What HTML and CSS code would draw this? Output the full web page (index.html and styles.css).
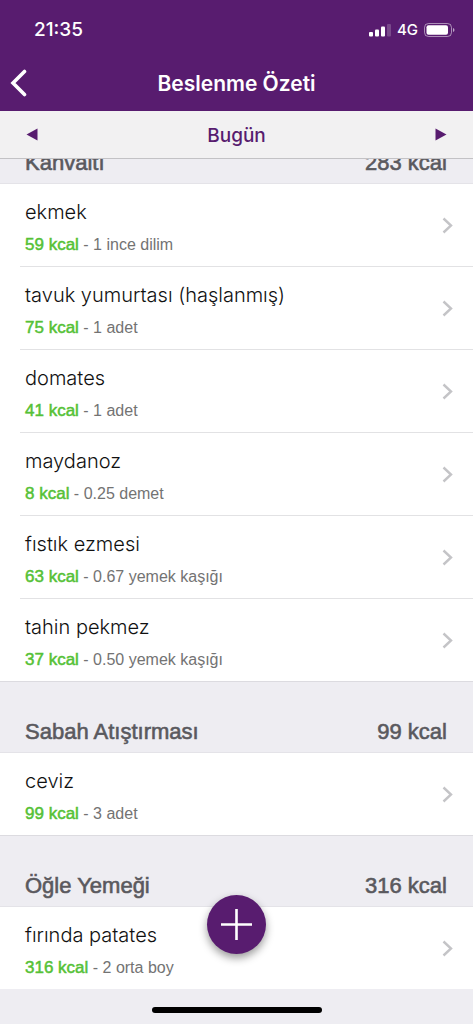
FILE: index.html
```html
<!DOCTYPE html>
<html lang="tr">
<head>
<meta charset="utf-8">
<meta name="viewport" content="width=device-width, initial-scale=1">
<title>Beslenme Özeti</title>
<link rel="stylesheet" href="styles.css">
</head>
<body>
<svg class="sprite" aria-hidden="true">
  <symbol id="chevron" viewBox="0 0 11 17"><path d="M1.5 1.5 L9 8.5 L1.5 15.5" fill="none" stroke="#c4c4c7" stroke-width="2.400"/></symbol>
</svg>
<header class="top">
  <div class="status">
    <span class="clock">21:35</span>
    <div class="indicators">
      <svg width="22" height="14" viewBox="0 0 22 14" aria-hidden="true">
        <rect x="0" y="9" width="4" height="4.500" rx="1" fill="#fff"/>
        <rect x="6" y="6.500" width="4" height="7" rx="1" fill="#fff"/>
        <rect x="12" y="3.500" width="4" height="10" rx="1" fill="#fff"/>
        <rect x="18" y="1" width="4" height="12.500" rx="1" fill="#fff" opacity=".2"/>
      </svg>
      <span class="network">4G</span>
      <svg width="31" height="14" viewBox="0 0 31 14" aria-hidden="true">
        <rect x=".5" y=".5" width="27" height="13" rx="4" fill="none" stroke="#fff" stroke-opacity=".5"/>
        <rect x="2.5" y="2.3" width="21.5" height="9.4" rx="2" fill="#fff"/>
        <path d="M29 5 Q30.500 5.500 30.500 7 Q30.500 8.500 29 9 Z" fill="#fff" opacity=".6"/>
      </svg>
    </div>
  </div>
  <nav class="navbar">
    <button class="back" type="button" aria-label="Geri">
      <svg width="17" height="28" viewBox="0 0 17 28" aria-hidden="true"><path d="M14.500 2.500 L3 14 L14.500 25.500" fill="none" stroke="#fff" stroke-width="3.600" stroke-linecap="round"/></svg>
    </button>
    <h1 class="title">Beslenme Özeti</h1>
  </nav>
</header>
<div class="datebar">
  <button class="step" type="button" aria-label="Önceki gün"><svg width="12" height="13" viewBox="0 0 12 13" aria-hidden="true"><path d="M0.500 6.500 L11.500 0.500 V12.500 Z" fill="#581c6f"/></svg></button>
  <span class="day">Bugün</span>
  <button class="step" type="button" aria-label="Sonraki gün"><svg width="12" height="13" viewBox="0 0 12 13" aria-hidden="true"><path d="M11.500 6.500 L0.500 0.500 V12.500 Z" fill="#581c6f"/></svg></button>
</div>
<main class="meals">
  <section class="meal scrolled">
    <h2 class="meal-head"><span>Kahvaltı</span><span>283 kcal</span></h2>
    <ul class="foods">
      <li><a class="food" href="#"><span class="info"><span class="name">ekmek</span><span class="detail"><b>59 kcal</b> - 1 ince dilim</span></span><svg class="chev"><use href="#chevron"/></svg></a></li>
      <li><a class="food" href="#"><span class="info"><span class="name">tavuk yumurtası (haşlanmış)</span><span class="detail"><b>75 kcal</b> - 1 adet</span></span><svg class="chev"><use href="#chevron"/></svg></a></li>
      <li><a class="food" href="#"><span class="info"><span class="name">domates</span><span class="detail"><b>41 kcal</b> - 1 adet</span></span><svg class="chev"><use href="#chevron"/></svg></a></li>
      <li><a class="food" href="#"><span class="info"><span class="name">maydanoz</span><span class="detail"><b>8 kcal</b> - 0.25 demet</span></span><svg class="chev"><use href="#chevron"/></svg></a></li>
      <li><a class="food" href="#"><span class="info"><span class="name">fıstık ezmesi</span><span class="detail"><b>63 kcal</b> - 0.67 yemek kaşığı</span></span><svg class="chev"><use href="#chevron"/></svg></a></li>
      <li><a class="food" href="#"><span class="info"><span class="name">tahin pekmez</span><span class="detail"><b>37 kcal</b> - 0.50 yemek kaşığı</span></span><svg class="chev"><use href="#chevron"/></svg></a></li>
    </ul>
  </section>
  <section class="meal">
    <h2 class="meal-head"><span>Sabah Atıştırması</span><span>99 kcal</span></h2>
    <ul class="foods">
      <li><a class="food" href="#"><span class="info"><span class="name">ceviz</span><span class="detail"><b>99 kcal</b> - 3 adet</span></span><svg class="chev"><use href="#chevron"/></svg></a></li>
    </ul>
  </section>
  <section class="meal">
    <h2 class="meal-head"><span>Öğle Yemeği</span><span>316 kcal</span></h2>
    <ul class="foods">
      <li><a class="food" href="#"><span class="info"><span class="name">fırında patates</span><span class="detail"><b>316 kcal</b> - 2 orta boy</span></span><svg class="chev"><use href="#chevron"/></svg></a></li>
    </ul>
  </section>
</main>
<button class="add" type="button" aria-label="Ekle">
  <svg width="31" height="31" viewBox="0 0 31 31" aria-hidden="true"><path d="M15.500 0 V31 M0 15.500 H31" stroke="#fff" stroke-width="2.600"/></svg>
</button>
<div class="home-bar"></div>
</body>
</html>
```

FILE: styles.css
```css
* { box-sizing: border-box; }
body {
  margin: 0;
  min-height: 100vh;
  display: flex;
  flex-direction: column;
  background: #eeedf2;
  font-family: "Liberation Sans", Arial, sans-serif;
  color: #111;
}
button { border: 0; background: none; padding: 0; margin: 0; font: inherit; cursor: pointer; }
svg { display: block; flex: none; }
.sprite { position: absolute; width: 0; height: 0; }

.top { background: #581c6f; color: #fff; font-family: Inter, "Liberation Sans", sans-serif; }
.status {
  display: flex;
  align-items: center;
  justify-content: space-between;
  height: 55px;
  padding: 4px 18px 0 34px;
}
.clock { font-size: 19px; font-weight: 500; }
.indicators { display: flex; align-items: center; gap: 6px; }
.network { font-size: 15px; font-weight: 500; }
.navbar {
  display: grid;
  grid-template-columns: 48px 1fr 48px;
  align-items: center;
  height: 56px;
}
.back { justify-self: start; padding-left: 10px; }
.title { margin: 0; padding-top: 2px; text-align: center; font-size: 21px; line-height: 28px; font-weight: 600; }

.datebar {
  display: flex;
  align-items: center;
  justify-content: space-between;
  height: 48px;
  padding: 0 26px;
  background: #f2f1f2;
  border-bottom: 1px solid #c3c2c5;
}
.day { padding-top: 2px; color: #581c6f; font-family: Inter, sans-serif; font-size: 19px; font-weight: 500; }

.meals { overflow: hidden; padding-bottom: 34px; }
.scrolled { margin-top: -47px; }
.meal-head {
  display: flex;
  justify-content: space-between;
  align-items: flex-end;
  margin: 0;
  height: 72px;
  padding: 0 26px 7px 25px;
  border-top: 1px solid #dcdbe0;
  border-bottom: 1px solid #e4e3e8;
  color: #5a595e;
  font-size: 22px;
  line-height: 26px;
  font-weight: 400;
  -webkit-text-stroke: 0.6px currentColor;
}
.foods { list-style: none; margin: 0; padding: 0; background: #fff; }
.foods li { padding-left: 20px; }
.foods li + li .food { border-top: 1px solid #e2e2e4; }
.food {
  display: flex;
  align-items: center;
  justify-content: space-between;
  padding: 14px 20px 10px 5px;
  color: inherit;
  text-decoration: none;
}
.info { display: flex; flex-direction: column; gap: 8px; }
.name { font-family: Inter, sans-serif; font-weight: 300; font-size: 20px; line-height: 28px; }
.detail { font-size: 16px; line-height: 22px; color: #737373; }
.detail b { color: #55c136; font-size: 17px; font-weight: 400; line-height: 16px; -webkit-text-stroke: 0.5px currentColor; }
.chev { width: 11px; height: 17px; margin-bottom: 4px; }

.add {
  position: fixed;
  left: 50%;
  bottom: 70px;
  display: grid;
  place-items: center;
  width: 59px;
  height: 59px;
  margin-left: -30px;
  border-radius: 50%;
  background: #581c6f;
  box-shadow: 0 4px 8px rgba(0, 0, 0, .4);
}
.home-bar {
  position: fixed;
  left: 50%;
  bottom: 11px;
  width: 170px;
  height: 6px;
  margin-left: -85px;
  border-radius: 3px;
  background: #000;
}
```
